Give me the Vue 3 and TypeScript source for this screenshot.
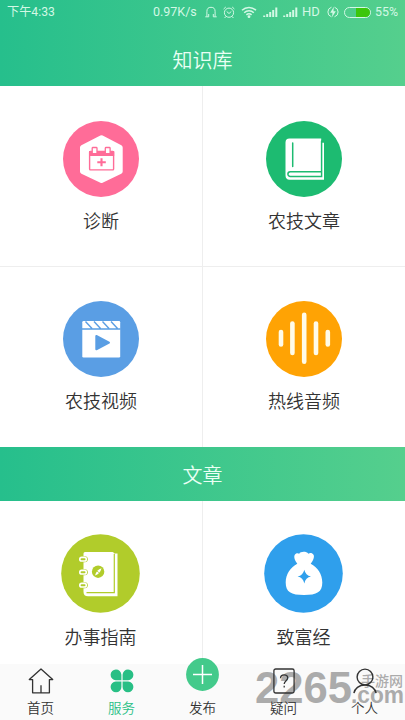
<script setup lang="ts">
interface Entry {
  label: string
  icon: string
  color: string
}
interface Tab {
  label: string
  icon: string
  active?: boolean
}

const knowledge: Entry[] = [
  { label: '诊断', icon: 'diagnose', color: '#ff6c98' },
  { label: '农技文章', icon: 'book', color: '#1dbb71' },
  { label: '农技视频', icon: 'video', color: '#5a9ee4' },
  { label: '热线音频', icon: 'audio', color: '#ffa304' },
]
const articles: Entry[] = [
  { label: '办事指南', icon: 'guide', color: '#b1cc2b' },
  { label: '致富经', icon: 'money', color: '#2f9fec' },
]
const sections = [
  { id: 'knowledge', title: '', entries: knowledge },
  { id: 'articles', title: '文章', entries: articles },
]
const tabs: Tab[] = [
  { label: '首页', icon: 'home' },
  { label: '服务', icon: 'service', active: true },
  { label: '发布', icon: 'publish' },
  { label: '疑问', icon: 'question' },
  { label: '个人', icon: 'person' },
]
const audioBars = [
  { x: 15, h: 17 },
  { x: 26.4, h: 34 },
  { x: 38.2, h: 51.5 },
  { x: 50, h: 34 },
  { x: 61.8, h: 17 },
]
</script>

<template>
  <div class="screen">
    <header class="header">
      <div class="status">
        <span class="time">下午4:33</span>
        <span class="speed">0.97K/s</span>
        <svg class="s-head" width="12" height="13" viewBox="0 0 12 13" fill="none" stroke="currentColor">
          <path d="M1.900 10.500V5.400a4.100 4.100 0 0 1 8.200 0v5.100M.3 10.800h3.400V8M11.700 10.800H8.300V8" />
        </svg>
        <svg class="s-alarm" width="12" height="13" viewBox="0 0 12 13" fill="none" stroke="currentColor">
          <circle cx="6" cy="6.700" r="4.600" />
          <path d="M3.700 5.500 6 7.500l2.300-2M.6 3l2.200-2M11.400 3 9.200 1M2.700 10.500l-1 1.500M9.300 10.500l1 1.500" />
        </svg>
        <svg class="s-wifi" width="16" height="12" viewBox="0 0 16 12" fill="none" stroke="currentColor" stroke-width="1.500">
          <path d="M1 4.300a10 10 0 0 1 14 0M3.200 6.700a6.800 6.800 0 0 1 9.600 0M5.400 8.900a3.700 3.700 0 0 1 5.200 0" />
          <circle cx="8" cy="10.600" r=".7" />
        </svg>
        <svg v-for="n in 2" :key="n" class="s-signal" width="15" height="10" viewBox="0 0 15 10" fill="none" stroke="currentColor" stroke-width="2">
          <path d="M1.200 10V8.600M4.200 10V7M7.200 10V5M10.200 10V3M13.300 10V.6" />
        </svg>
        <span class="hd">HD</span>
        <svg class="s-bolt" width="12" height="12" viewBox="0 0 12 12" fill="none" stroke="currentColor">
          <path d="M4.500 1.200a5 5 0 0 0 0 9.600M7.500 1.200a5 5 0 0 1 0 9.600" />
          <path d="M6.800.8 3.200 6.700h2.300L5 11.300 8.800 5.300H6.500z" fill="currentColor" stroke="none" />
        </svg>
        <span class="battery"><i></i></span>
        <span class="percent">55%</span>
      </div>
      <h1 class="title">知识库</h1>
    </header>

    <main class="content">
      <section v-for="s in sections" :key="s.id" :class="['section', s.id]">
        <h2 v-if="s.title" class="banner">{{ s.title }}</h2>
        <div class="grid">
          <div v-for="e in s.entries" :key="e.label" class="cell">
            <svg v-if="e.icon === 'guide' || e.icon === 'money'" class="disc" width="79" height="79" viewBox="0 0 79 79">
              <circle cx="39.500" cy="39.500" r="39.300" :fill="e.color" />
              <template v-if="e.icon === 'guide'">
                <path d="M24 18h27.500q1.500 0 1.500 1.500h3.500v42.800H27q-4.500 0-4.500-4.500V19.500q0-1.500 1.500-1.500z" fill="#fff" />
                <path d="M53.300 20v38.600H25.500" fill="none" :stroke="e.color" stroke-width="1.200" />
                <template v-for="y in [25.2, 38.2, 51.2]" :key="y">
                  <rect x="17.800" :y="y - 3" width="9" height="6" rx="3" :fill="e.color" />
                  <rect x="18.800" :y="y - 1.8" width="6.500" height="3.600" rx="1.800" :fill="e.color" stroke="#fff" stroke-width="1.600" />
                </template>
                <circle cx="37.100" cy="37.700" r="6.200" :fill="e.color" />
                <path d="M40.500 34.200q-5 1.500-6.500 7.300 5-1.500 6.500-7.300z" fill="#fff" />
                <path d="M35.400 36.700l3.300 2.500" :stroke="e.color" stroke-width=".8" />
              </template>
              <template v-else>
                <path d="M33.300 29.700C30.500 26 29.500 22.500 31 20.500c1.200-1.600 3-1.600 4.200-.8 1.300-2.500 7.200-2.700 9.200 0 1.600-1.100 4-.8 5.100 1 1.200 2-.2 5.600-2.800 9C53.500 33 58.300 40 58.300 48.500 58.300 58 53 61 40 61S21.700 58 21.700 48.500c0-8.500 5-15.500 11.600-18.800z" fill="#fff" />
                <path d="M40.300 35.800q1.200 5.600 6.700 6.800-5.500 1.200-6.700 6.800-1.200-5.600-6.700-6.800 5.500-1.200 6.700-6.800z" :fill="e.color" />
              </template>
            </svg>
            <svg v-else class="disc" width="76" height="76" viewBox="0 0 76 76">
              <circle cx="38" cy="38" r="38" :fill="e.color" />
              <template v-if="e.icon === 'diagnose'">
                <path d="M38.500 16.800 57.200 26.500V50.500L38.500 59.500 19.500 50.500V26.500z" fill="#fff" stroke="#fff" stroke-width="5" stroke-linejoin="round" />
                <rect x="26.600" y="30.500" width="24" height="18.400" rx=".8" fill="#fff" :stroke="e.color" stroke-width="1.400" />
                <path d="M26 30h25.200v5H26z" :fill="e.color" />
                <rect v-for="x in [29.2, 42.3]" :key="x" :x="x" y="26.500" width="4.800" height="6.200" rx=".8" fill="#fff" :stroke="e.color" stroke-width="1.300" />
                <path d="M38.500 37.300v8M34.300 41.300h8.500" fill="none" :stroke="e.color" stroke-width="2.100" />
              </template>
              <template v-else-if="e.icon === 'book'">
                <path d="M23.500 17.500h31.700v4.300H58V58.800H23.500q-4-.2-4-4.600V21.500q0-4 4-4z" fill="#fff" />
                <path d="M26.700 22v23.500M55.600 20v35.500H24.300a2.400 2.400 0 0 1 0-4.800H55" fill="none" :stroke="e.color" stroke-width="1.500" stroke-linecap="round" />
              </template>
              <template v-else-if="e.icon === 'video'">
                <rect x="19.300" y="20" width="37.900" height="36.400" rx="1.200" fill="#fff" />
                <path d="M19 28h38.500M22.500 20.500l6.500 7M31 20.500l6.500 7M39.500 20.500l6.500 7M48 20.500l6.500 7" :stroke="e.color" stroke-width="1.400" />
                <path d="M33.300 35v13.300L46 41.700z" :fill="e.color" :stroke="e.color" stroke-width="2" stroke-linejoin="round" />
              </template>
              <template v-else>
                <rect v-for="b in audioBars" :key="b.x" :x="b.x - 2.3" :y="37.2 - b.h / 2" width="4.600" :height="b.h" rx="2.300" fill="#fffbe8" />
              </template>
            </svg>
            <span class="label">{{ e.label }}</span>
          </div>
        </div>
      </section>
    </main>

    <nav class="tabs">
      <svg class="watermark" width="153" height="44" viewBox="0 0 153 44">
        <text class="wm-num" x="3" y="37" textLength="97" lengthAdjust="spacingAndGlyphs">2265</text>
        <text class="wm-cn" x="109" y="19.500" textLength="42" lengthAdjust="spacingAndGlyphs">手游网</text>
        <text class="wm-com" x="99" y="37" textLength="53" lengthAdjust="spacingAndGlyphs">.com</text>
      </svg>
      <div v-for="t in tabs" :key="t.label" :class="['tab', { active: t.active, raised: t.icon === 'publish' }]">
        <svg v-if="t.icon === 'home'" width="26" height="26" viewBox="0 0 26 26" fill="none" stroke="currentColor" stroke-width="1.300" stroke-linejoin="round">
          <path d="M4.600 11.600H1.300L13 1l11.700 10.600h-3.300v13.200H4.600zM13 24.500v-7.200" />
        </svg>
        <svg v-else-if="t.icon === 'service'" width="26" height="26" viewBox="0 0 26 26" fill="currentColor">
          <path d="M12.400 12.300H6.800a5.400 5.400 0 1 1 5.600-5.600zM13.600 12.300V6.700a5.400 5.400 0 1 1 5.600 5.600zM12.400 13.500v5.400a5.400 5.400 0 1 1-5.600-5.400zM13.600 13.500h5.600a5.400 5.400 0 1 1-5.600 5.400z" />
        </svg>
        <svg v-else-if="t.icon === 'publish'" width="33" height="33" viewBox="0 0 33 33">
          <circle cx="16.500" cy="16.500" r="16.400" fill="#43ca8b" />
          <path d="M16.500 7v19M7 16.500h19" stroke="#fff" stroke-width="1.500" />
        </svg>
        <svg v-else-if="t.icon === 'question'" width="26" height="26" viewBox="0 0 26 26" fill="none" stroke="currentColor" stroke-width="1.300">
          <rect x="2.900" y="1" width="20.200" height="24" rx="1.800" />
          <path d="M9.500 10.200c0-4.500 7.200-4.300 7.200-.2 0 2.600-3.500 2.800-3.500 6M13.200 17.700v1.700" />
        </svg>
        <svg v-else width="26" height="26" viewBox="0 0 26 26" fill="none" stroke="currentColor" stroke-width="1.400">
          <circle cx="13" cy="9" r="7.900" />
          <path d="M1.900 25.200C2.700 20.500 7 17 13 17s10.300 3.500 11.100 8.200" />
        </svg>
        <span class="tab-label">{{ t.label }}</span>
      </div>
    </nav>
  </div>
</template>

<style>
body {
  margin: 0;
  overflow: hidden;
}
</style>

<style scoped>
.screen {
  width: 405px;
  height: 720px;
  display: flex;
  flex-direction: column;
  overflow: hidden;
  background: #fff;
  color: #333;
  font-family: Roboto, "Noto Sans CJK SC", sans-serif;
}
.header {
  flex: none;
  height: 86px;
  background: linear-gradient(90deg, #26bf8c, #55cf8d);
  color: #e9fff4;
}
.status {
  height: 24px;
  display: flex;
  align-items: center;
  padding: 0 7px;
  font-size: 12px;
  line-height: 24px;
  color: #d3f8e5;
  white-space: nowrap;
}
.status svg {
  flex: none;
}
.time {
  width: 146px;
  font-size: 12.2px;
}
.speed {
  width: 52px;
  font-size: 12.5px;
}
.s-alarm {
  margin-left: 6px;
}
.s-wifi {
  margin-left: 6px;
}
.s-signal {
  margin-left: 5px;
}
.s-wifi + .s-signal {
  margin-left: 6px;
}
.hd {
  width: 25px;
  margin-left: 4px;
  font-size: 13px;
}
.battery {
  box-sizing: border-box;
  width: 27px;
  height: 11px;
  margin-left: 5px;
  border: 1px solid #d3f8e5;
  border-radius: 6px;
  display: flex;
  justify-content: flex-end;
  overflow: hidden;
}
.battery i {
  width: 14px;
  background: #3cc60c;
}
.percent {
  margin-left: 4px;
  font-size: 12.4px;
}
.title,
.banner {
  margin: 0;
  font-size: 20px;
  font-weight: 350;
  text-align: center;
}
.title {
  line-height: 30px;
  padding-top: 22px;
}
.content {
  flex: 1;
  min-height: 0;
  overflow: hidden;
}
.banner {
  height: 54px;
  line-height: 58px;
  color: #e9fff4;
  background: linear-gradient(90deg, #26bf8c, #55cf8d);
}
.grid {
  display: grid;
  grid-template-columns: 203px 202px;
}
.cell {
  box-sizing: border-box;
  height: 181px;
  padding-top: 35px;
  display: flex;
  flex-direction: column;
  align-items: center;
  border-right: 1px solid #eee;
  border-bottom: 1px solid #eee;
}
.cell:nth-child(2n) {
  border-right: 0;
}
.knowledge .cell:nth-child(n + 3) {
  height: 180px;
  padding-top: 34px;
  border-bottom: 0;
}
.articles .cell {
  padding-top: 33px;
  padding-right: 1px;
}
.disc {
  flex: none;
}
.label {
  margin-top: 12px;
  font-size: 18px;
  font-weight: 350;
  line-height: 26px;
}
.tabs {
  position: relative;
  flex: none;
  height: 56px;
  display: flex;
  background: #fafafa;
}
.tab {
  position: relative;
  flex: 1;
  display: flex;
  flex-direction: column;
  align-items: center;
  padding-top: 4px;
}
.tab svg {
  flex: none;
}
.tab.active {
  color: #28bf85;
}
.tab.raised svg {
  margin-top: -10px;
  margin-bottom: 3px;
}
.tab-label {
  margin-top: 4px;
  font-size: 13.5px;
  font-weight: 350;
  line-height: 20px;
}
.watermark {
  position: absolute;
  right: 0;
  top: 2px;
  fill: #777;
  opacity: 0.6;
}
.wm-num {
  font: bold 44px "Liberation Sans", sans-serif;
}
.wm-cn {
  font: 500 14px "Noto Sans CJK SC", sans-serif;
}
.wm-com {
  font: bold 24px "Liberation Sans", sans-serif;
}
</style>
